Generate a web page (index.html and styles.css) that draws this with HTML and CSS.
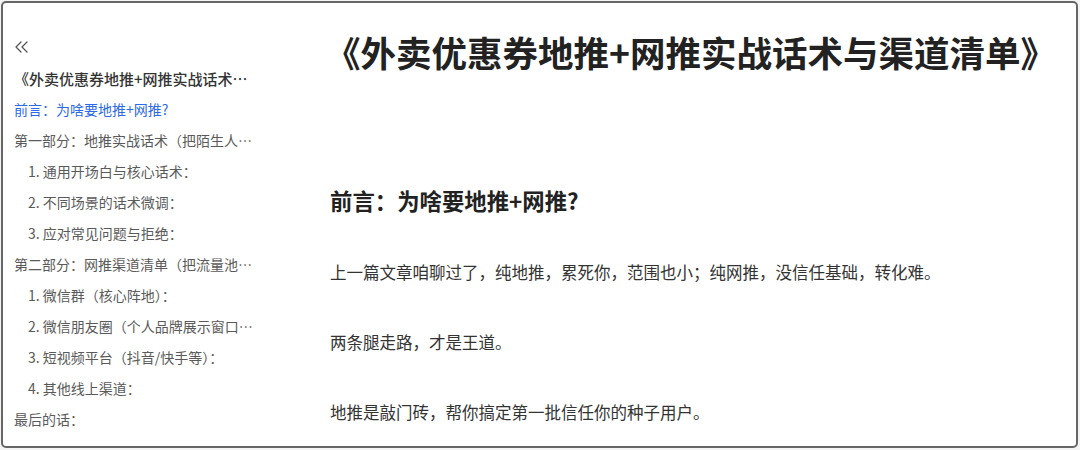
FILE: index.html
```html
<!DOCTYPE html>
<html lang="zh-CN">
<head>
<meta charset="utf-8">
<title>外卖优惠券地推+网推实战话术与渠道清单</title>
<link rel="stylesheet" href="styles.css">
</head>
<body>
<div class="frame">
  <aside class="sidebar">
    <div class="collapse">
      <svg width="16" height="12" viewBox="0 0 16 12" fill="none" stroke="#555" stroke-width="1.3" stroke-linecap="round" stroke-linejoin="round"><polyline points="7,1 2,6 7,11"/><polyline points="13,1 8,6 13,11"/></svg>
    </div>
    <ul class="toc">
      <li class="toc-title">《外卖优惠券地推+网推实战话术与渠道清单》</li>
      <li class="active">前言：为啥要地推+网推?</li>
      <li>第一部分：地推实战话术（把陌生人变成用户）</li>
      <li class="sub">1. 通用开场白与核心话术：</li>
      <li class="sub">2. 不同场景的话术微调：</li>
      <li class="sub">3. 应对常见问题与拒绝：</li>
      <li>第二部分：网推渠道清单（把流量池建起来）</li>
      <li class="sub">1. 微信群（核心阵地）：</li>
      <li class="sub">2. 微信朋友圈（个人品牌展示窗口）：</li>
      <li class="sub">3. 短视频平台（抖音/快手等）：</li>
      <li class="sub">4. 其他线上渠道：</li>
      <li>最后的话：</li>
    </ul>
  </aside>
  <main class="content">
    <h1 class="doc-title">《外卖优惠券地推+网推实战话术与渠道清单》</h1>
    <h2 class="section-title">前言：为啥要地推+网推?</h2>
    <p>上一篇文章咱聊过了，纯地推，累死你，范围也小；纯网推，没信任基础，转化难。</p>
    <p>两条腿走路，才是王道。</p>
    <p>地推是敲门砖，帮你搞定第一批信任你的种子用户。</p>
  </main>
</div>
</body>
</html>
```
FILE: styles.css
```css
html, body {
  margin: 0;
  padding: 0;
  background: #f4f4f4;
}
body {
  width: 1080px;
  height: 450px;
  overflow: hidden;
  font-family: "Noto Sans CJK SC", "Noto Sans", sans-serif;
}
.frame {
  box-sizing: border-box;
  margin: 1px 0 0 1px;
  width: 1077px;
  height: 447px;
  border: 2px solid #666;
  border-radius: 5px;
  background: #fff;
  display: flex;
  overflow: hidden;
}
.sidebar {
  flex: 0 0 auto;
  width: 242px;
  padding-left: 11px;
  color: #5a5a5a;
}
.collapse {
  margin-top: 36px;
  height: 16px;
  display: flex;
  align-items: center;
}
.toc {
  list-style: none;
  margin: 8px 0 0;
  padding: 0;
}
.toc li {
  font-size: 14px;
  line-height: 31px;
  height: 31px;
  white-space: nowrap;
  overflow: hidden;
  text-overflow: ellipsis;
}
.toc .toc-title {
  font-size: 15px;
  font-weight: 500;
  color: #333;
}
.toc .active {
  color: #2a6ae8;
}
.toc .sub {
  padding-left: 14px;
}
.content {
  flex: 1 1 auto;
  padding: 29px 0 0 74px;
  color: #222;
}
.doc-title {
  margin: 0 0 0 -5px;
  font-size: 35.5px;
  line-height: 40px;
  font-weight: 700;
  color: #222;
  white-space: nowrap;
}
.section-title {
  margin: 113px 0 45px;
  font-size: 22.4px;
  line-height: 30px;
  font-weight: 700;
  color: #222;
}
.content p {
  margin: 0 0 46px;
  font-size: 16.5px;
  line-height: 24px;
  color: #333;
}
```
